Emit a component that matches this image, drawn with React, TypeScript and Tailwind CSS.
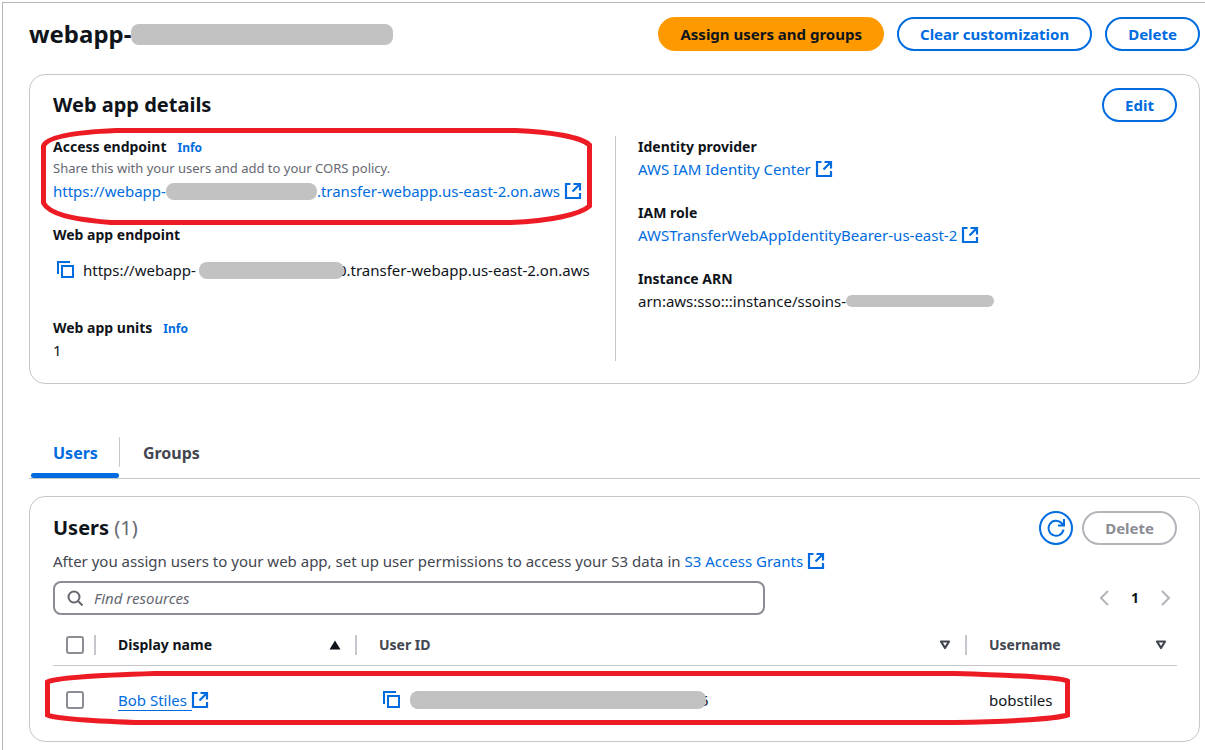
import type { ReactNode } from "react";

function ExternalIcon() {
  return (
    <svg viewBox="0 0 16 16" className="inline-block h-4 w-4 shrink-0 overflow-visible" fill="none" stroke="currentColor" strokeWidth="2.2" aria-hidden="true">
      <path d="M5.500 1H1v14h14v-5M8.500 1H15v6.500M15 1 7.500 8.500" />
    </svg>
  );
}

function CopyIcon() {
  return (
    <svg viewBox="0 0 18 18" className="h-[18px] w-[18px]" fill="none" stroke="currentColor" strokeWidth="2" aria-hidden="true">
      <path d="M1 13V1h12" />
      <path d="M5 5h11v11H5z" />
    </svg>
  );
}

function Chevron({ d }: { d: string }) {
  return (
    <svg viewBox="0 0 10 16" className="h-4 w-[10px]" fill="none" stroke="currentColor" strokeWidth="2" aria-hidden="true">
      <path d={d} />
    </svg>
  );
}

function SortIcon({ active = false }: { active?: boolean }) {
  return active ? (
    <svg viewBox="0 0 12 10" className="h-[10px] w-3" fill="currentColor" aria-hidden="true">
      <path d="M6 0.500 11.500 9.500H0.500z" />
    </svg>
  ) : (
    <svg viewBox="0 0 12 10" className="h-[10px] w-3" fill="none" stroke="currentColor" strokeWidth="2.2" strokeLinejoin="round" aria-hidden="true">
      <path d="M2 1.500h8L6 8z" />
    </svg>
  );
}

function Redacted({ className }: { className: string }) {
  return <span aria-hidden="true" className={`relative inline-block shrink-0 rounded-lg bg-[#c2c2c2] ${className}`} />;
}

const outline = "h-[34px] rounded-full border-2 px-[21px] text-[15px] font-bold";

function Button({ children }: { children: ReactNode }) {
  return <button className={`${outline} border-[#006ce0] bg-white text-[#006ce0]`}>{children}</button>;
}

function ExternalLink({ children }: { children: ReactNode }) {
  return (
    <a href="#" className="inline-flex items-center gap-[5px] text-[#006ce0]">
      <span className="inline-flex items-center">{children}</span>
      <ExternalIcon />
    </a>
  );
}

function Info() {
  return <a href="#" className="ml-[11px] text-xs font-bold text-[#006ce0]">Info</a>;
}

function Label({ children }: { children: ReactNode }) {
  return <dt className="text-sm leading-[22px] font-bold">{children}</dt>;
}

function Header({ label, active, divider = true }: { label: string; active?: boolean; divider?: boolean }) {
  return (
    <th scope="col" className={`p-0 text-left text-sm font-bold ${active ? "text-[#0f141a]" : "text-[#424650]"}`}>
      <div className={`flex h-5 items-center justify-between pl-[22px] ${divider ? "border-r-2 border-[#c6c6cd] pr-[14px]" : "pr-[10px]"}`}>
        <span>{label}</span>
        <SortIcon active={active} />
      </div>
    </th>
  );
}

const checkbox = "block h-[18px] w-[18px] appearance-none rounded-[3px] border-2 border-[#8c8c94] bg-white";

export default function App() {
  return (
    <div className="min-h-screen bg-white pt-[2px] pl-[2px] font-['Noto_Sans',sans-serif] text-[15px] leading-[22px] text-[#0f141a]">
      <main className="min-h-[748px] border-t border-l border-[#b4b4bb] pt-[14px] pr-[5px] pl-[26px]">
        <header className="flex items-center justify-between">
          <h1 className="flex items-center text-2xl font-bold">
            webapp-
            <Redacted className="h-[21px] w-[262px]" />
          </h1>
          <div className="flex gap-[13px]">
            <button className="h-[34px] rounded-full bg-[#ff9900] px-[22px] text-[15px] font-bold">Assign users and groups</button>
            <Button>Clear customization</Button>
            <Button>Delete</Button>
          </div>
        </header>

        <section className="relative mt-[23px] rounded-2xl border border-[#c6c6cd] pt-[13px] pr-[22px] pb-[22px] pl-[23px]">
          <div className="flex items-center justify-between">
            <h2 className="text-xl font-bold">Web app details</h2>
            <Button>Edit</Button>
          </div>
          <div className="mt-[14px] grid grid-cols-2">
            <dl>
              <Label>Access endpoint<Info /></Label>
              <dd className="text-[13px] leading-5 text-[#656871]">Share this with your users and add to your CORS policy.</dd>
              <dd className="mb-[22px] flex h-6 items-center pt-[2px] whitespace-nowrap">
                <ExternalLink>
                  https://webapp-
                  <Redacted className="h-[17px] w-[151px]" />
                  .transfer-webapp.us-east-2.on.aws
                </ExternalLink>
              </dd>
              <Label>Web app endpoint</Label>
              <dd className="mb-[23px] flex h-12 items-center pl-1 whitespace-nowrap">
                <button aria-label="Copy web app endpoint" className="mr-2 text-[#006ce0]"><CopyIcon /></button>
                https://webapp-
                <Redacted className="-mr-[6px] ml-[3px] h-[17px] w-[145px]" />
                0.transfer-webapp.us-east-2.on.aws
              </dd>
              <Label>Web app units<Info /></Label>
              <dd>1</dd>
            </dl>
            <dl className="border-l border-[#c6c6cd] pl-[22px]">
              <Label>Identity provider</Label>
              <dd className="mb-[22px] flex"><ExternalLink>AWS IAM Identity Center</ExternalLink></dd>
              <Label>IAM role</Label>
              <dd className="mb-[22px] flex"><ExternalLink>AWSTransferWebAppIdentityBearer-us-east-2</ExternalLink></dd>
              <Label>Instance ARN</Label>
              <dd className="flex items-center">
                arn:aws:sso:::instance/ssoins-
                <Redacted className="h-3 w-[148px]" />
              </dd>
            </dl>
          </div>
          <svg viewBox="0 0 551 97" className="pointer-events-none absolute top-[53px] left-[11px] h-[97px] w-[551px]" fill="none" stroke="#ed1c24" strokeWidth="5" aria-hidden="true">
            <path d="M75 2.500H475C510 4 540 9 548.500 17V78C540 86 510 93 470 94.500H70C30 91 8 86 2.500 75V18C6 8 40 4 75 2.500Z" />
          </svg>
        </section>

        <nav role="tablist" className="mt-[53px] flex border-b border-[#c6c6cd] text-base font-bold">
          <button role="tab" aria-selected="true" className="relative h-[41px] pr-[21px] pb-[9px] pl-6 text-[#006ce0]">
            Users
            <span className="absolute right-0 bottom-0 left-[2px] h-[5px] rounded-full bg-[#006ce0]" />
          </button>
          <span className="h-[30px] w-px bg-[#c6c6cd]" />
          <button role="tab" aria-selected="false" className="h-[41px] px-[23px] pb-[9px] text-[#424650]">Groups</button>
        </nav>

        <section className="relative mt-[17px] rounded-2xl border border-[#c6c6cd] pt-[14px] pr-[22px] pb-[6px] pl-[23px]">
          <div className="flex items-center justify-between">
            <h2 className="text-xl font-bold">
              Users <span className="font-normal text-[#656871]">(1)</span>
            </h2>
            <div className="flex gap-[9px]">
              <button aria-label="Refresh" className="flex h-[34px] w-[34px] items-center justify-center rounded-full border-2 border-[#006ce0] text-[#006ce0]">
                <svg viewBox="0 0 18 18" className="h-[18px] w-[18px]" fill="none" stroke="currentColor" strokeWidth="2" aria-hidden="true">
                  <path d="M16.500 10.500A7.500 7.500 0 1 1 14.500 4L16.500 6M17 0v6.500H11" />
                </svg>
              </button>
              <button disabled className={`${outline} border-[#b4b4bb] text-[#8c8c94]`}>Delete</button>
            </div>
          </div>
          <p className="mt-[5px] flex items-center gap-1 text-[#424650]">
            After you assign users to your web app, set up user permissions to access your S3 data in <ExternalLink>S3 Access Grants</ExternalLink>
          </p>
          <div className="mt-[9px] flex items-center justify-between">
            <label className="flex h-[34px] w-full max-w-[712px] items-center rounded-lg border-2 border-[#8c8c94] px-3">
              <svg viewBox="0 0 16 16" className="h-4 w-4 text-[#656871]" fill="none" stroke="currentColor" strokeWidth="2" aria-hidden="true">
                <circle cx="7" cy="7" r="5.500" />
                <path d="m11 11 4.500 4.500" />
              </svg>
              <input aria-label="Find resources" placeholder="Find resources" className="ml-[11px] min-w-0 flex-1 outline-none placeholder:text-[#656871] placeholder:italic" />
            </label>
            <div className="flex items-center pr-[6px] text-[#b4b4bb]">
              <button aria-label="Previous page"><Chevron d="M9 1 2 8l7 7" /></button>
              <button className="w-[52px] text-sm font-bold text-[#0f141a]">1</button>
              <button aria-label="Next page"><Chevron d="m1 1 7 7-7 7" /></button>
            </div>
          </div>
          <table className="mt-[10px] w-full table-fixed border-collapse">
            <colgroup>
              <col className="w-[43px]" />
              <col className="w-[261px]" />
              <col />
              <col className="w-[210px]" />
            </colgroup>
            <thead>
              <tr className="h-10 border-b border-[#c6c6cd]">
                <th scope="col" className="p-0">
                  <div className="flex h-5 items-center border-r-2 border-[#c6c6cd] pl-[13px]">
                    <input type="checkbox" aria-label="Select all users" className={checkbox} />
                  </div>
                </th>
                <Header label="Display name" active />
                <Header label="User ID" />
                <Header label="Username" divider={false} />
              </tr>
            </thead>
            <tbody>
              <tr className="h-[70px]">
                <td className="p-0 pl-[13px]"><input type="checkbox" aria-label="Select Bob Stiles" className={checkbox} /></td>
                <td className="p-0 pl-[22px]">
                  <a href="#" className="flex items-center text-[#006ce0]">
                    <span className="border-b border-[#006ce0] pr-[5px] leading-5">Bob Stiles</span>
                    <ExternalIcon />
                  </a>
                </td>
                <td className="p-0 pl-[26px]">
                  <div className="flex items-center">
                    <button aria-label="Copy user ID" className="mr-[9px] text-[#006ce0]"><CopyIcon /></button>
                    <Redacted className="-mr-[6px] h-[18px] w-[296px]" />
                    5
                  </div>
                </td>
                <td className="p-0 pl-[22px]">bobstiles</td>
              </tr>
            </tbody>
          </table>
          <svg viewBox="0 0 1025 54" className="pointer-events-none absolute bottom-[16px] left-[15px] h-[54px] w-[1025px]" fill="none" stroke="#ed1c24" strokeWidth="5" aria-hidden="true">
            <path d="M110 2.500H910C960 4 1015 6 1022.500 10V44C1010 48 960 51 910 51.500H90C50 50 10 48 2.500 44V11C10 7 60 4 110 2.500Z" />
          </svg>
        </section>
      </main>
    </div>
  );
}
